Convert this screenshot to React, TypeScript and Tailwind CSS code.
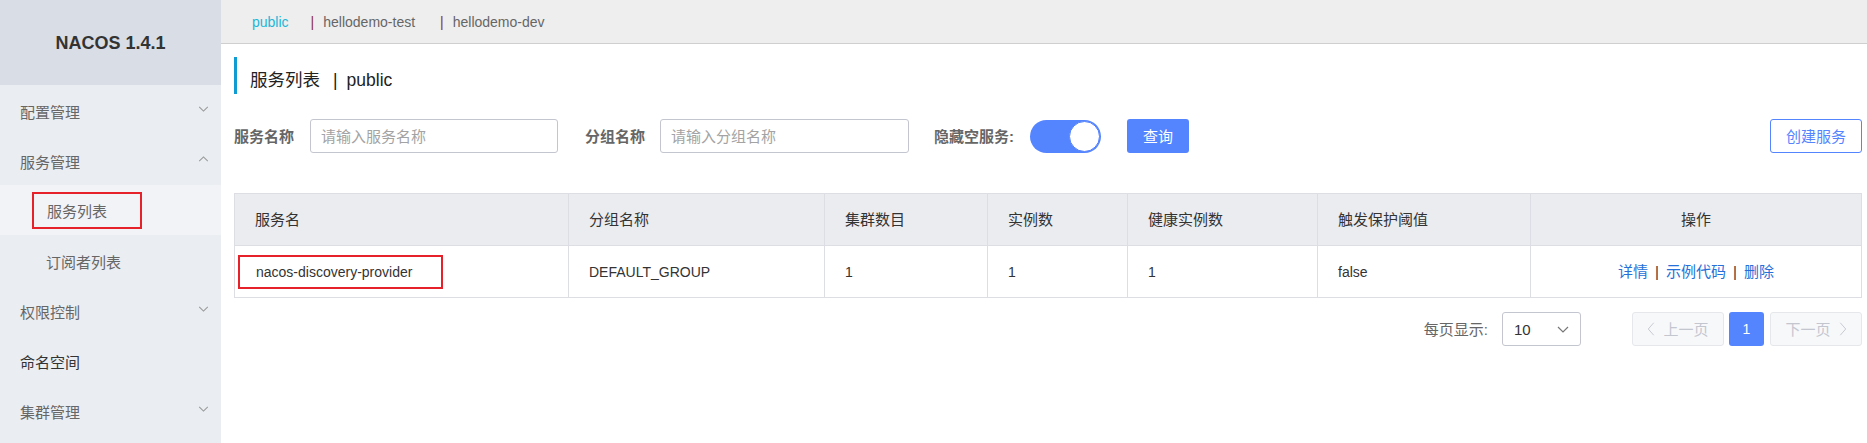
import React from "react";

const menu = [
  { label: "配置管理", chevron: "down" },
  { label: "服务管理", chevron: "up" },
  { label: "服务列表", sub: true, active: true },
  { label: "订阅者列表", sub: true },
  { label: "权限控制", chevron: "down" },
  { label: "命名空间", dark: true },
  { label: "集群管理", chevron: "down" },
];

function Chevron({ dir, className }: { dir: "up" | "down" | "left" | "right"; className?: string }) {
  const points = {
    down: "1,1 6,6 11,1",
    up: "1,6 6,1 11,6",
    left: "8,1 1,9 8,17",
    right: "1,1 8,9 1,17",
  }[dir];
  const box = dir === "left" || dir === "right" ? "0 0 9 18" : "0 0 12 7";
  return (
    <svg className={className} viewBox={box} fill="none" stroke="currentColor" strokeWidth={1.2}>
      <polyline points={points} />
    </svg>
  );
}

function Sidebar() {
  return (
    <aside className="flex w-[221px] shrink-0 flex-col bg-[#eaedf1]">
      <div className="flex h-[85px] items-center justify-center bg-[#d9dee6] text-[18px] font-bold text-[#333]">
        NACOS 1.4.1
      </div>
      {menu.map((item) =>
        item.sub ? (
          item.active ? (
            <div key={item.label} className="flex h-[50px] items-center bg-[#f2f3f7] pl-[32px]">
              <span className="flex h-[37px] w-[110px] items-center border-2 border-[#e6212a] pl-[13px] pt-[3px] text-[15px] text-[#666]">
                {item.label}
              </span>
            </div>
          ) : (
            <div key={item.label} className="flex h-[50px] items-center pl-[46px] pt-[4px] text-[15px] text-[#666]">
              {item.label}
            </div>
          )
        ) : (
          <div key={item.label} className="flex h-[50px] items-center justify-between pl-[20px] pr-[12px]">
            <span className={`pt-[4px] text-[15px] ${item.dark ? "text-[#333]" : "text-[#666]"}`}>{item.label}</span>
            {item.chevron && (
              <Chevron dir={item.chevron as "up" | "down"} className="mb-[3px] h-[6px] w-[11px] text-[#999]" />
            )}
          </div>
        )
      )}
    </aside>
  );
}

function TopNav() {
  return (
    <div className="flex h-[44px] shrink-0 items-center border-b border-[#cfcfcf] bg-[#eeeeee] pl-[31px] text-[14px]">
      <span className="mr-[22px] text-[#21b6d9]">public</span>
      <span className="mr-[9px] text-[#8b2f2f]">|</span>
      <span className="mr-[25px] text-[#666]">hellodemo-test</span>
      <span className="mr-[9px] text-[#8b2f2f]">|</span>
      <span className="text-[#666]">hellodemo-dev</span>
    </div>
  );
}

function SearchBar() {
  return (
    <div className="mt-[25px] flex h-[34px] items-center">
      <span className="mr-[16px] text-[15px] font-bold text-[#666]">服务名称</span>
      <input
        className="h-[34px] w-[248px] rounded-[3px] border border-[#c4c6cf] px-[10px] text-[15px] outline-none placeholder:text-[#a3a3a3]"
        placeholder="请输入服务名称"
      />
      <span className="ml-[27px] mr-[15px] text-[15px] font-bold text-[#666]">分组名称</span>
      <input
        className="h-[34px] w-[249px] rounded-[3px] border border-[#c4c6cf] px-[10px] text-[15px] outline-none placeholder:text-[#a3a3a3]"
        placeholder="请输入分组名称"
      />
      <span className="ml-[25px] mr-[16px] text-[15px] font-bold text-[#666]">隐藏空服务:</span>
      <div className="flex h-[33px] w-[71px] items-center justify-end rounded-full bg-[#5584ff] pr-[1px]">
        <div className="h-[31px] w-[31px] rounded-full border border-[#5584ff] bg-white" />
      </div>
      <button className="ml-[26px] h-[34px] w-[62px] rounded-[3px] bg-[#5584ff] text-[15px] text-white">
        查询
      </button>
      <button className="ml-auto h-[34px] w-[92px] rounded-[3px] border border-[#5584ff] bg-white text-[15px] text-[#5584ff]">
        创建服务
      </button>
    </div>
  );
}

const headers = ["服务名", "分组名称", "集群数目", "实例数", "健康实例数", "触发保护阈值"];

function ServiceTable() {
  const cell = "h-[52px] border border-[#dcdee3] pl-[20px] text-left";
  return (
    <table className="mt-[40px] w-full table-fixed border-collapse text-[#333]">
      <colgroup>
        <col className="w-[334px]" />
        <col className="w-[256px]" />
        <col className="w-[163px]" />
        <col className="w-[140px]" />
        <col className="w-[190px]" />
        <col className="w-[213px]" />
        <col />
      </colgroup>
      <thead>
        <tr className="bg-[#ebecf0]">
          {headers.map((h) => (
            <th key={h} className={`${cell} text-[15px] font-normal`}>
              {h}
            </th>
          ))}
          <th className="h-[52px] border border-[#dcdee3] text-center text-[15px] font-normal">操作</th>
        </tr>
      </thead>
      <tbody>
        <tr>
          <td className="h-[52px] border border-[#dcdee3] pl-[3px]">
            <span className="flex h-[34px] w-[205px] items-center border-2 border-[#e6212a] pl-[16px] text-[14px]">
              nacos-discovery-provider
            </span>
          </td>
          <td className={`${cell} text-[14px]`}>DEFAULT_GROUP</td>
          <td className={`${cell} text-[14px]`}>1</td>
          <td className={`${cell} text-[14px]`}>1</td>
          <td className={`${cell} text-[14px]`}>1</td>
          <td className={`${cell} text-[14px]`}>false</td>
          <td className="h-[52px] border border-[#dcdee3] text-center text-[15px]">
            <span className="text-[#2671d9]">详情</span>
            <span className="mx-[7px] text-[#333]">|</span>
            <span className="text-[#2671d9]">示例代码</span>
            <span className="mx-[7px] text-[#333]">|</span>
            <span className="text-[#2671d9]">删除</span>
          </td>
        </tr>
      </tbody>
    </table>
  );
}

function Pagination() {
  return (
    <div className="mt-[14px] flex h-[34px] items-center justify-end">
      <span className="mr-[14px] text-[15px] text-[#666]">每页显示:</span>
      <div className="flex h-[34px] w-[79px] items-center justify-between rounded-[3px] border border-[#c4c6cf] pl-[11px] pr-[11px]">
        <span className="text-[15px] text-[#333]">10</span>
        <Chevron dir="down" className="h-[7px] w-[12px] text-[#777]" />
      </div>
      <div className="ml-[51px] flex h-[34px] w-[92px] items-center justify-center gap-[8px] rounded-[3px] border border-[#e6e7eb] bg-[#f7f8fa] text-[15px] text-[#c4c6cf]">
        <Chevron dir="left" className="h-[14px] w-[8px]" />
        上一页
      </div>
      <div className="ml-[5px] flex h-[34px] w-[35px] items-center justify-center rounded-[3px] bg-[#5584ff] text-[14px] text-white">
        1
      </div>
      <div className="ml-[6px] flex h-[34px] w-[92px] items-center justify-center gap-[8px] rounded-[3px] border border-[#e6e7eb] bg-[#f7f8fa] text-[15px] text-[#c4c6cf]">
        下一页
        <Chevron dir="right" className="h-[14px] w-[8px]" />
      </div>
    </div>
  );
}

export default function App() {
  return (
    <div className="flex h-[443px] w-[1867px] overflow-hidden bg-white font-['Liberation_Sans','Noto_Sans_CJK_SC',sans-serif] leading-none">
      <Sidebar />
      <main className="flex min-w-0 flex-1 flex-col">
        <TopNav />
        <div className="pl-[13px] pr-[5px]">
          {/* Title */}
          <div className="mt-[13px] flex h-[37px] items-center border-l-[3px] border-[#109cd3] pl-[13px] pt-[10px] text-[17.5px] text-[#222]">
            <span>服务列表</span>
            <span className="ml-[13px] mr-[9px]">|</span>
            <span>public</span>
          </div>
          <SearchBar />
          <ServiceTable />
          <Pagination />
        </div>
      </main>
    </div>
  );
}
